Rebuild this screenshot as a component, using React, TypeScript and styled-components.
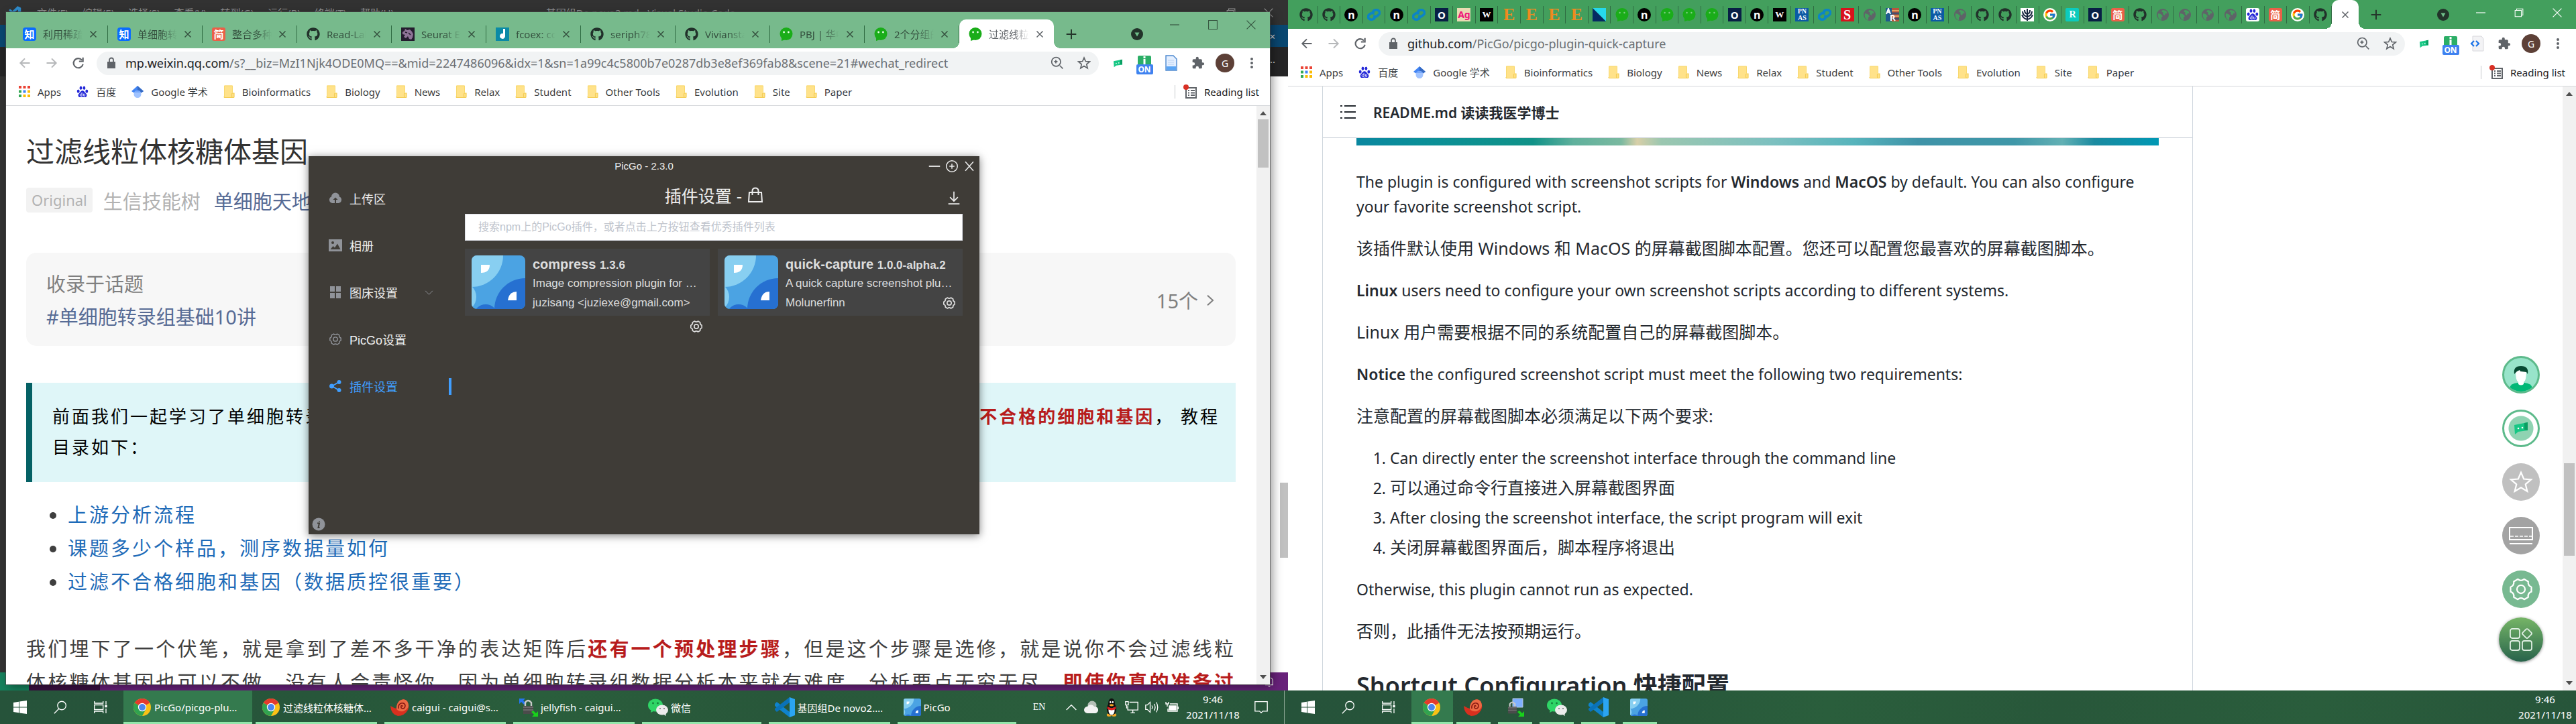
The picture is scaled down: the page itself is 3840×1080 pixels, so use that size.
import React from "react";
import styled, { createGlobalStyle, css } from "styled-components";
import { FaGithub } from "react-icons/fa";
import { FcGoogle } from "react-icons/fc";
import { VscVscode } from "react-icons/vsc";

const ui = `"Noto Sans", "Noto Sans CJK SC", sans-serif`;
const arial = `"Liberation Sans", "Noto Sans CJK SC", sans-serif`;

const Global = createGlobalStyle`
  * { box-sizing: border-box; }
  body { margin: 0; font-family: ${ui}; }
  button { border: 0; padding: 0; margin: 0; background: none; font: inherit; color: inherit; }
  input { border: 0; padding: 0; margin: 0; background: none; font: inherit; color: inherit; outline: 0; min-width: 0; }
  a { color: inherit; text-decoration: none; }
  h1, h2, p, ul, ol { margin: 0; padding: 0; font-weight: normal; }
  svg { display: block; flex: none; }
`;

/* ---------- desktop ---------- */
const Desktop = styled.div`
  display: grid;
  grid-template-columns: 1fr 1fr;
  height: 100vh;
  overflow: hidden;
`;
const Monitor = styled.div`
  display: flex;
  flex-direction: column;
  min-width: 0;
  min-height: 0;
`;
const WorkArea = styled.div`
  position: relative;
  flex: 1;
  min-height: 0;
  overflow: hidden;
  background: #fff;
`;

/* ---------- code editor behind ---------- */
const Editor = styled.div`
  display: flex;
  flex-direction: column;
  height: 100%;
`;
const EditorTitle = styled.div`
  display: grid;
  grid-template-columns: 1fr auto 1fr;
  align-items: center;
  height: 37px;
  padding: 0 22px 0 12px;
  background: #323232;
  color: #949494;
  font-size: 15px;
`;
const EditorMenu = styled.div`
  display: flex;
  align-items: center;
  gap: 21px;
  svg { color: #2f8fd0; }
`;
const EditorControls = styled.div`
  display: flex;
  justify-content: flex-end;
  gap: 42px;
`;
const EditorRow = styled.div<{ $bg: string; $h: number }>`
  display: flex;
  align-items: center;
  justify-content: flex-end;
  height: ${(p) => p.$h}px;
  padding-right: 19px;
  background: ${(p) => p.$bg};
  color: #ddd;
  font-size: 15px;
`;
const EditorBody = styled.div`
  display: flex;
  flex: 1;
  justify-content: space-between;
`;
const ActivityBar = styled.div`
  width: 60px;
  background: #333;
`;
const EditorScroll = styled.div`
  width: 12px;
  padding-top: 606px;
  &::before { content: ""; display: block; height: 112px; background: #c1c1c1; }
`;
const EditorStatus = styled.div`
  display: flex;
  align-items: center;
  height: 27px;
  background: #68217a;
  color: #eee;
  padding-right: 20px;
`;
const StatusPart = styled.div<{ $w: number; $bg: string }>`
  width: ${(p) => p.$w}px;
  height: 100%;
  background: ${(p) => p.$bg};
`;
const Push = styled.div`flex: 1;`;

/* ---------- browser ---------- */
const Browser = styled.section<{ $floating?: boolean }>`
  display: flex;
  flex-direction: column;
  background: #fff;
  overflow: hidden;
  ${(p) =>
    p.$floating
      ? css`
          position: absolute;
          inset: 18px 27px 9px 9px;
          box-shadow: 0 0 0 1px rgba(70, 70, 70, 0.7), 4px 4px 14px rgba(0, 0, 0, 0.4);
        `
      : css`height: 100%;`}
`;
const Strip = styled.div<{ $bg: string; $tall?: boolean }>`
  display: flex;
  align-items: flex-end;
  flex: none;
  height: ${(p) => (p.$tall ? 54 : 43)}px;
  padding-left: 11px;
  background: ${(p) => p.$bg};
`;
const StripButton = styled.button<{ $w: number }>`
  display: flex;
  align-items: center;
  justify-content: center;
  width: ${(p) => p.$w}px;
  height: 43px;
  color: #24362b;
`;
const WinControls = styled.div<{ $light?: boolean }>`
  display: flex;
  align-self: flex-start;
  color: ${(p) => (p.$light ? "#fff" : "#35543f")};
`;
const WinButton = styled.button`
  display: flex;
  align-items: center;
  justify-content: center;
  width: 57px;
  height: 38px;
`;
const TabBox = styled.div<{ $active?: boolean; $narrow?: boolean }>`
  position: relative;
  display: flex;
  align-items: center;
  height: 43px;
  color: ${(p) => (p.$active ? "#5f6368" : "#35513f")};
  font-size: 15px;
  ${(p) => (p.$narrow ? css`flex: 1; min-width: 0; justify-content: center;` : css`width: 141px; padding: 0 15px 0 14px; gap: 10px;`)}
  ${(p) =>
    p.$active
      ? css`
          background: #fff;
          border-radius: 10px 10px 0 0;
          &::before, &::after {
            content: "";
            position: absolute;
            bottom: 0;
            width: 10px;
            height: 10px;
          }
          &::before { right: 100%; background: radial-gradient(circle at 0 0, transparent 10px, #fff 10px); }
          &::after { left: 100%; background: radial-gradient(circle at 100% 0, transparent 10px, #fff 10px); }
        `
      : css`border-right: 1px solid transparent; border-image: linear-gradient(transparent 22%, #2f6b42 22%, #2f6b42 80%, transparent 80%) 1;`}
`;
const ActiveNarrow = styled(TabBox)`
  flex: none;
  width: 40px;
`;
const TabTitle = styled.span`
  flex: 1;
  min-width: 0;
  overflow: hidden;
  white-space: nowrap;
  mask-image: linear-gradient(90deg, #000 60%, transparent);
`;
const Tile = styled.span<{ $bg?: string; $fg?: string; $round?: string; $size?: number; $serif?: boolean }>`
  display: flex;
  align-items: center;
  justify-content: center;
  flex: none;
  width: 20px;
  height: 20px;
  overflow: hidden;
  border-radius: ${(p) => p.$round ?? "0"};
  background: ${(p) => p.$bg ?? "transparent"};
  color: ${(p) => p.$fg ?? "#fff"};
  font-family: ${(p) => (p.$serif ? `"Liberation Serif", serif` : ui)};
  font-size: ${(p) => p.$size ?? 14}px;
  font-weight: bold;
  line-height: 10px;
  text-align: center;
`;
const Toolbar = styled.div`
  display: flex;
  align-items: center;
  flex: none;
  height: 44px;
  padding: 0 7px 0 8px;
  color: #5f6368;
`;
const ToolButton = styled.button<{ $dim?: boolean }>`
  display: flex;
  align-items: center;
  justify-content: center;
  width: 40px;
  height: 40px;
  opacity: ${(p) => (p.$dim ? 0.45 : 1)};
`;
const Omnibox = styled.div`
  display: flex;
  align-items: center;
  flex: 1;
  min-width: 0;
  height: 35px;
  margin: 0 8px 0 7px;
  padding: 0 2px 0 14px;
  border-radius: 18px;
  background: #f1f3f4;
  font-size: 18px;
  label { color: #202124; padding-left: 13px; }
  input { flex: 1; color: #6b6f73; }
`;
const OnBadge = styled.span`
  display: flex;
  flex-direction: column;
  align-items: center;
  padding-top: 6px;
  b {
    display: block;
    width: 25px;
    height: 15px;
    border-radius: 2px;
    background: #3f82f0;
    color: #fff;
    font-size: 12px;
    line-height: 15px;
    text-align: center;
  }
`;
const Avatar = styled.span`
  display: flex;
  align-items: center;
  justify-content: center;
  width: 28px;
  height: 28px;
  border-radius: 50%;
  background: #5d4037;
  color: #fff;
  font-size: 14px;
`;
const Bookmarks = styled.nav`
  display: flex;
  align-items: center;
  flex: none;
  gap: 23px;
  height: 42px;
  padding: 0 16px 0 19px;
  border-bottom: 1px solid #d5d7da;
  color: #3c4043;
  font-size: 15px;
  line-height: 20px;
`;
const Bookmark = styled.a`
  display: flex;
  align-items: center;
  gap: 11px;
  white-space: nowrap;
`;
const Reading = styled.button`
  display: flex;
  align-items: center;
  gap: 10px;
  height: 20px;
  margin-left: auto;
  padding-left: 12px;
  border-left: 1px solid #c4c7ca;
  color: #202124;
`;
const Viewport = styled.div`
  position: relative;
  display: flex;
  flex: 1;
  min-height: 0;
  overflow: hidden;
`;
const ScrollTrack = styled.div`
  display: flex;
  flex-direction: column;
  align-items: center;
  flex: none;
  width: 20px;
  padding: 8px 0;
  background: #f1f1f1;
  color: #505050;
`;
const Thumb = styled.div<{ $before: number; $h: number }>`
  width: 16px;
  height: ${(p) => p.$h}px;
  margin: ${(p) => p.$before}px 0 auto;
  background: #c1c1c1;
`;

/* ---------- article page ---------- */
const Article = styled.main`
  flex: 1;
  min-width: 0;
  padding: 38px 31px 0 30px;
`;
const Title = styled.h1`
  font-size: 42px;
  line-height: 60px;
  color: #333;
`;
const Meta = styled.div`
  display: flex;
  align-items: center;
  gap: 20px;
  height: 37px;
  margin-top: 24px;
  font-size: 29px;
  color: #b2b2b2;
  white-space: nowrap;
  a { color: #576b95; }
`;
const Original = styled.span`
  margin-right: -4px;
  padding: 0 8px;
  border-radius: 4px;
  background: #f2f2f2;
  font-size: 22px;
  line-height: 37px;
`;
const Topic = styled.section`
  display: flex;
  align-items: center;
  justify-content: space-between;
  margin-top: 60px;
  padding: 22px 30px 19px;
  border-radius: 15px;
  background: #f7f7f7;
  color: #7f7f7f;
  font-size: 29px;
  line-height: 49px;
  a { display: block; color: #576b95; }
`;
const TopicCount = styled.button`
  display: flex;
  align-items: center;
  gap: 10px;
  font-size: 29px;
`;
const Quote = styled.blockquote`
  margin: 55px 0 0;
  padding: 27px 24px 29px 30px;
  border-left: 9px solid #056165;
  background: #dff6f8;
  color: #000;
  font-size: 26px;
  line-height: 46px;
  letter-spacing: 3px;
`;
const QuoteLine = styled.div`
  display: flex;
  justify-content: space-between;
  white-space: pre;
`;
const Red = styled.strong`
  color: #b71c1c;
  font-weight: bold;
`;
const Links = styled.ul`
  margin-top: 24px;
  padding-left: 62px;
  color: #3f3f3f;
  font-size: 29px;
  line-height: 50px;
  letter-spacing: 3px;
  a { color: #1e6bb8; }
`;
const Body = styled.p`
  margin-top: 50px;
  color: #3f3f3f;
  font-size: 29px;
  line-height: 50px;
  letter-spacing: 3px;
  text-align: justify;
  text-align-last: justify;
  white-space: nowrap;
`;

/* ---------- PicGo window ---------- */
const PicWindow = styled.section`
  position: absolute;
  left: 460px;
  top: 233px;
  display: flex;
  flex-direction: column;
  width: 1000px;
  height: 564px;
  background: #3f3c37;
  color: #eee;
  font-family: ${arial};
  box-shadow: 0 2px 12px rgba(0, 0, 0, 0.5);
`;
const PicTitle = styled.header`
  display: grid;
  grid-template-columns: 1fr auto 1fr;
  align-items: center;
  flex: none;
  height: 29px;
  padding: 0 6px;
  font-size: 15px;
`;
const PicControls = styled.div`
  display: flex;
  grid-column: 3;
  justify-content: flex-end;
  gap: 8px;
`;
const PicBody = styled.div`
  display: flex;
  flex: 1;
  min-height: 0;
`;
const Side = styled.nav`
  display: flex;
  flex-direction: column;
  width: 213px;
`;
const SideItem = styled.button<{ $active?: boolean }>`
  display: flex;
  align-items: center;
  gap: 11px;
  height: 70px;
  padding: 0 27px 2px 30px;
  color: ${(p) => (p.$active ? "#409eff" : "#eee")};
  font-size: 18px;
  svg { color: ${(p) => (p.$active ? "#409eff" : "#909399")}; }
  ${(p) =>
    p.$active &&
    css`
      padding-right: 0;
      &::after { content: ""; width: 4px; height: 25px; margin-left: auto; background: #409eff; }
    `}
  svg + span + svg { margin-left: auto; }
`;
const Info = styled.button`
  width: 20px;
  height: 20px;
  margin: auto 0 5px 5px;
  color: #909399;
`;
const PicMain = styled.div`
  flex: 1;
  min-width: 0;
  padding: 0 25px 0 20px;
`;
const PicHeading = styled.div`
  display: grid;
  grid-template-columns: 1fr auto 1fr;
  align-items: center;
  height: 57px;
  h1 { display: flex; grid-column: 2; align-items: center; gap: 9px; font-size: 25px; }
  > button { justify-self: end; padding: 8px 3px 0 0; }
`;
const Search = styled.input`
  display: block;
  width: 100%;
  height: 40px;
  padding: 0 19px;
  border: 1px solid #dcdfe6;
  background: #fff;
  font-size: 16px;
  color: #333;
  &::placeholder { color: #c0c4cc; opacity: 1; }
`;
const Cards = styled.div`
  display: grid;
  grid-template-columns: 1fr 1fr;
  gap: 12px;
  margin-top: 12px;
`;
const Card = styled.article`
  display: flex;
  gap: 11px;
  min-width: 0;
  height: 100px;
  padding: 10px;
  background: #444;
  color: #ddd;
  font-size: 17px;
`;
const CardText = styled.div`
  flex: 1;
  min-width: 0;
  white-space: nowrap;
`;
const CardName = styled.div`
  font-size: 20px;
  font-weight: bold;
  line-height: 27px;
  small { font-size: 17px; }
`;
const CardDesc = styled.div`
  overflow: hidden;
  line-height: 28px;
  text-overflow: ellipsis;
`;
const CardFoot = styled.div`
  display: flex;
  flex-wrap: wrap;
  gap: 5px 12px;
  line-height: 30px;
  button { display: flex; align-items: center; height: 30px; margin-left: auto; }
`;

/* ---------- repository page ---------- */
const Repo = styled.main`
  flex: 1;
  min-width: 0;
  padding-left: 51px;
`;
const ReadmeBox = styled.div`
  max-width: 1298px;
  height: 100%;
  border: solid #d0d7de;
  border-width: 0 1px;
  color: #24292f;
`;
const ReadmeHead = styled.header`
  display: flex;
  align-items: center;
  gap: 25px;
  height: 77px;
  padding-left: 26px;
  border-bottom: 1px solid #c9cfd8;
  font-size: 21px;
  font-weight: 600;
`;
const Prose = styled.div`
  padding: 0 50px;
  font-size: 23px;
  line-height: 37px;
  p { margin-bottom: 25px; }
  strong { font-weight: 600; }
  ol { padding-left: 50px; margin-bottom: 25px; }
  li + li { margin-top: 7px; }
  h2 { margin-top: 38px; font-size: 36px; font-weight: 600; line-height: 47px; white-space: nowrap; }
`;
const Zh = styled.span`
  font-size: 25px;
`;
const Banner = styled.div`
  height: 11px;
  margin-bottom: 36px;
  background: linear-gradient(90deg, #0a87a0 0%, #0a8f98 8%, #109288 22%, #5fb09c 27%, #7ab9a0 33%, #d8cfa8 35%, #9bc7b0 38%, #7cc0c0 52%, #57b4bc 62%, #3f93a8 70%, #3f97a8 82%, #62b0b4 88%, #1a8aa0 92%, #0098b4 100%);
`;
const Floaters = styled.div`
  position: absolute;
  top: 402px;
  right: 49px;
  display: flex;
  flex-direction: column;
  align-items: center;
  gap: 24px;
`;
const Round = styled.button<{ $bg: string; $ring?: boolean }>`
  display: flex;
  align-items: center;
  justify-content: center;
  width: 56px;
  height: 56px;
  border: ${(p) => (p.$ring ? "3px solid #5dba8b" : "0")};
  border-radius: 50%;
  background: ${(p) => p.$bg};
  color: #fff;
  overflow: hidden;
`;
const BigRound = styled(Round)`
  width: 66px;
  height: 66px;
  margin-top: -10px;
  box-shadow: 0 1px 4px rgba(0, 0, 0, 0.45);
`;

/* ---------- taskbar ---------- */
const Taskbar = styled.footer`
  display: flex;
  flex: none;
  height: 50px;
  background: linear-gradient(100deg, #26533a 0%, #27563a 25%, #2a5e3c 42%, #28573a 60%, #2a5d3c 80%, #27553a 100%);
  color: #fff;
  font-size: 15px;
`;
const TaskGroup = styled.div`
  display: flex;
  margin-right: 4px;
`;
const TaskIcon = styled.button`
  display: flex;
  align-items: center;
  justify-content: center;
  width: 60px;
`;
const TaskApp = styled.button<{ $active?: boolean; $compact?: boolean }>`
  position: relative;
  display: flex;
  align-items: center;
  gap: 4px;
  width: ${(p) => (p.$compact ? 62 : 192)}px;
  padding: 0 ${(p) => (p.$compact ? 17 : 14)}px 0 ${(p) => (p.$compact ? 16 : 14)}px;
  ${(p) => p.$active && css`background: #347a4e;`}
  &::after {
    content: "";
    position: absolute;
    left: ${(p) => (p.$active ? 0 : 5)}px;
    right: ${(p) => (p.$active ? 0 : 6)}px;
    bottom: 0;
    height: 3px;
    background: #93e6ab;
  }
  span { overflow: hidden; text-overflow: ellipsis; white-space: nowrap; }
`;
const Tray = styled.div`
  display: flex;
  align-items: center;
  margin-left: auto;
`;
const Lang = styled.button`
  width: 56px;
  margin-right: 5px;
  font-family: "Liberation Serif", serif;
  font-size: 14px;
`;
const TrayButton = styled.button`
  display: flex;
  justify-content: center;
  width: 30px;
`;
const Clock = styled.time`
  display: flex;
  flex-direction: column;
  align-items: center;
  width: 92px;
  font-size: 15px;
  line-height: 23px;
`;
const Notify = styled.button`
  display: flex;
  justify-content: center;
  width: 52px;
  margin-right: 8px;
`;
const ShowDesktop = styled.button`
  width: 6px;
  height: 50px;
  border-left: 1px solid #8fa897;
`;

/* ---------- drawings ---------- */
const Line = ({ d, s = 20, w = 2, box = 24 }: { d: string; s?: number; w?: number; box?: number }) => (
  <svg width={s} height={s} viewBox={`0 0 ${box} ${box}`} fill="none" stroke="currentColor" strokeWidth={w}>
    <path d={d} />
  </svg>
);
const Cross = ({ s = 14, w = 2.4 }) => <Line s={s} w={w} d="M3 3L21 21M21 3L3 21" />;
const Wx = () => (
  <svg width="20" height="20" viewBox="0 0 20 20">
    <circle cx="10" cy="9.5" r="9.5" fill="#1aad19" />
    <path d="M3 15l0 5 6-2z" fill="#1aad19" />
    <circle cx="6.6" cy="7" r="1.4" fill="#e8ffe8" />
    <circle cx="13.4" cy="7" r="1.4" fill="#e8ffe8" />
  </svg>
);
const WxDim = () => (
  <svg width="20" height="20" viewBox="0 0 20 20">
    <circle cx="10" cy="9.5" r="9.5" fill="#1aad19" />
    <path d="M3 15l0 5 6-2z" fill="#1aad19" />
    <circle cx="6.6" cy="7" r="1.2" fill="#7fce83" />
    <circle cx="13.4" cy="7" r="1.2" fill="#7fce83" />
  </svg>
);
const Curl = () => (
  <svg width="20" height="20" viewBox="0 0 20 20" fill="none" stroke="#0b84c6" strokeWidth="3.6" strokeLinecap="round">
    <path d="M9 8q-1-4 3-5t6 2-2 6-5 2" />
    <path d="M11 12q1 4-3 5t-6-2 2-6 5-2" />
  </svg>
);
const Globe = () => (
  <svg width="20" height="20" viewBox="0 0 20 20">
    <circle cx="10" cy="10" r="9" fill="#5f6368" />
    <path d="M3 8l4 1 3 3-2 2v4c-4-1-6-5-5-10zM10 3l5 1 2 4-3 0-1 3-3-2 1-2-3-2z" fill="#439f5d" />
  </svg>
);
const Baidu = ({ s = 20 }) => (
  <svg width={s} height={s} viewBox="0 0 20 20" fill="#2529d8">
    <ellipse cx="3" cy="9" rx="2.2" ry="2.9" />
    <ellipse cx="7.2" cy="3.6" rx="2.1" ry="3" />
    <ellipse cx="12.7" cy="3.6" rx="2.1" ry="3" />
    <ellipse cx="17" cy="9" rx="2.2" ry="2.9" />
    <path d="M10 8c3 0 3.600 3 6 5 2 2 1.400 6-2 6-1.500 0-2.400-.5-4-.5s-2.500.5-4 .5c-3.400 0-4-4-2-6 2.400-2 3-5 6-5z" />
    <path d="M9 11v6H7.500a1.500 1.500 0 010-3.500H9M11.500 13v3q0 1 1 1h1.500v-4" fill="none" stroke="#fff" strokeWidth="1" />
  </svg>
);
const Triangle = () => (
  <svg width="20" height="20" viewBox="0 0 20 20">
    <path d="M0 0H20V20z" fill="#26d9ec" />
    <path d="M0 0V20H20z" fill="#052a63" />
  </svg>
);
const Dino = () => (
  <svg width="20" height="20" viewBox="0 0 20 20">
    <path fill="#241c2e" d="M0 0h20v20H0z" />
    <path d="M2 7l3-2 1-3 3 2 4-1 3 3 2 4-1 5-2 3-3-1-2-4-3 3-3-2 2-3-4-1z" fill="#8d7396" />
    <path d="M6 7l3 1M11 8l3 3" stroke="#241c2e" strokeWidth="1.500" />
  </svg>
);
const Note = () => (
  <svg width="20" height="20" viewBox="0 0 20 20">
    <path fill="#0a8aa6" d="M0 0h20v20H0z" />
    <path d="M11 2h3v11a4 4 0 11-3-4z" fill="#fff" />
  </svg>
);
const Tree = () => (
  <svg width="20" height="20" viewBox="0 0 20 20">
    <path fill="#fff" d="M0 0h20v20H0z" />
    <path d="M10 1v18M3 5q0 6 7 8M17 5q0 6-7 8M6 3q0 5 4 6M14 3q0 5-4 6M2 10q2 6 8 7M18 10q-2 6-8 7" fill="none" stroke="#14243d" strokeWidth="2" />
  </svg>
);
const Stripes = () => (
  <svg width="20" height="20" viewBox="0 0 20 20">
    <path fill="#b9553c" d="M0 0h20v20H0z" />
    <path fill="#1f5b8e" d="M0 0h9v20H0z" />
    <path d="M9 4h11M9 12h11" stroke="#e0a060" strokeWidth="2" />
    <path d="M9 8h11M9 16h11" stroke="#49506a" strokeWidth="3" />
    <path d="M1 9L4 1l3 8M2 6h4M8 19v-8h3q3 2 0 4l3 4" fill="none" stroke="#fff" strokeWidth="2" />
  </svg>
);
const Circle = ({ r = 9 }) => (
  <svg width="20" height="20" viewBox="0 0 20 20">
    <circle cx="10" cy="10" r={r} fill="#22332a" />
    <path d="M6.500 7.500h7L10 13.500z" fill="#6fbf8a" />
  </svg>
);
const Apps = () => (
  <svg width="17" height="17" viewBox="0 0 17 17">
    {["#ea4335", "#ea4335", "#ea4335", "#34a853", "#4285f4", "#fbbc04", "#34a853", "#fbbc04", "#fbbc04"].map((c, i) => (
      <rect key={i} x={(i % 3) * 6.500} y={Math.floor(i / 3) * 6.500} width="4" height="4" fill={c} />
    ))}
  </svg>
);
const Scholar = () => (
  <svg width="18" height="18" viewBox="0 0 18 18">
    <path d="M9 0l9 8-9 6-9-6z" fill="#4285f4" />
    <path d="M9 0l9 8-9 6z" fill="#356ac3" />
    <circle cx="9" cy="12.500" r="5.500" fill="#a0c3ff" />
    <path d="M4 10a5.500 5.500 0 0110 0z" fill="#76a7fa" />
  </svg>
);
const Folder = () => (
  <svg width="17" height="19" viewBox="0 0 17 19">
    <path d="M1 1.500q0-1 1-1h11q1 0 1 1V12h2v5.500q0 1-1 1H2q-1 0-1-1z" fill="#ffe28a" />
    <path d="M1 17q0 1.500 1 1.500h12q-1.500 0-1.500-2V13q0-1 1.500-1h2v5.500q0 1-1.500 1H2" fill="none" stroke="#f4cd55" strokeWidth="1.200" />
    <path d="M1.500 17V1h12v10" fill="none" stroke="#f8d970" />
  </svg>
);
const PicLogo = ({ s = 80 }) => (
  <svg width={s} height={s} viewBox="0 0 80 80" style={{ borderRadius: Math.round(s / 10) }}>
    <path fill="#4ba3e3" d="M0 0h80v80H0z" />
    <circle cx="0" cy="0" r="47" fill="#88cff1" />
    <circle cx="-15" cy="62" r="22" fill="#88cff1" />
    <circle cx="80" cy="80" r="46" fill="#2670d1" />
    <circle cx="21" cy="91" r="18" fill="#2670d1" />
    <path d="M14 14h13q0 12-13 12zM67 54v13H54q2-13 13-13z" fill="#fff" />
  </svg>
);
const Gear = ({ s = 20, w = 1.600 }) => (
  <svg width={s} height={s} viewBox="0 0 24 24" fill="none" stroke="currentColor" strokeWidth={w} strokeLinejoin="round">
    <path d="M9 2.500q3 2.500 6 0l3.800 2.200q-.6 3.800 3 5.200v4.400q-3.600 1.300-3 5.100L15 21.600q-3-2.600-6 0l-3.800-2.200q.6-3.800-3-5.100V9.900q3.600-1.400 3-5.200z" />
    <circle cx="12" cy="12" r="3.800" />
  </svg>
);
const Chrome = () => (
  <svg width="28" height="28" viewBox="0 0 28 28">
    <circle cx="14" cy="14" r="13" fill="#fbc116" />
    <path d="M14 14L2.700 7.500A13 13 0 0125.300 7.500z" fill="#e33b2e" />
    <path d="M14 14L2.700 7.500A13 13 0 0014 27l5.500-10z" fill="#31a350" />
    <path d="M14 7.500h11.300L14 8z" fill="#e33b2e" />
    <circle cx="14" cy="14" r="6.200" fill="#fff" />
    <circle cx="14" cy="14" r="4.900" fill="#4a86ee" />
  </svg>
);
const Spiral = () => (
  <svg width="28" height="28" viewBox="0 0 28 28">
    <path d="M0 12q5 3 9 4 0-8 5-12 7-4 11 1 4 7 1 13-5 9-15 9Q1 25 0 12z" fill="#d8301f" />
    <path d="M9 16q0-8 5-12 7-4 11 1 4 7 0 11-4 5-10 4-5-1-6-4z" fill="#ec6a44" />
    <path d="M12 16q-1-6 4-8 5-1 6 3 0 5-4 5-3-1-2-4 2-1 2 1" fill="none" stroke="#8a1a12" strokeWidth="1.600" />
  </svg>
);
const Lock = ({ screen }: { screen?: boolean }) => (
  <svg width="28" height="28" viewBox="0 0 28 28">
    {screen ? (
      <path d="M11 1h15v13H11z" fill="#7fb0ff" stroke="#b8c8dd" />
    ) : (
      <path d="M0 1h9l-3 3 4 4-3 2-4-4-3 3z" fill="#2575f0" />
    )}
    <g transform={screen ? "translate(-1 3) scale(.85)" : undefined}>
      <path d="M9 13V7q4-6 9 0v6" fill="none" stroke="#c9c9c9" strokeWidth="2.400" />
      <path d="M6 12h15v12H6z" fill="#4b4b4b" />
      <path d="M6 14h15M6 18h15" stroke="#8a8a8a" />
    </g>
    <path d="M28 28h-9l3-3-4-4 3-2 4 4 3-3z" fill="#19d11b" />
  </svg>
);
const WeChat = () => (
  <svg width="30" height="28" viewBox="0 0 30 28">
    <ellipse cx="11" cy="11" rx="11" ry="9.500" fill="#2fd566" />
    <path d="M5 17l-1 5 6-3z" fill="#2fd566" />
    <circle cx="7.500" cy="8" r="1.400" fill="#14803a" />
    <circle cx="14.500" cy="8" r="1.400" fill="#14803a" />
    <ellipse cx="21" cy="18" rx="9" ry="7.500" fill="#ececec" />
    <path d="M22 24l5 3-1-5z" fill="#ececec" />
    <circle cx="18" cy="16" r="1.100" fill="#777" />
    <circle cx="24" cy="16" r="1.100" fill="#777" />
  </svg>
);
const CodeLogo = () => (
  <svg width="30" height="30" viewBox="0 0 30 30">
    <path d="M0 10l3-3 19 15v8L0 13z" fill="#0f83cc" />
    <path d="M0 19l3 3L22 8V0L0 17z" fill="#0a72b8" />
    <path d="M22 0l8 3v24l-8 3z" fill="#2ba5f2" />
  </svg>
);
const WinLogo = () => (
  <svg width="20" height="20" viewBox="0 0 20 20" fill="#fff">
    <path d="M0 3l8-1.200V9.500H0zM9 1.600L20 0v9.500H9zM0 10.500h8v7.700L0 17zM9 10.500h11V20L9 18.400z" />
  </svg>
);
const TaskView = () => (
  <svg width="20" height="20" viewBox="0 0 20 20" fill="none" stroke="#fff" strokeWidth="1.300">
    <path d="M.7 1v3h13V1M.7 19v-3h13v3M.7 6.500h13v7H.7zM18 1v5M18 12v7" />
    <path d="M17 7.500h2v2h-2z" fill="#fff" />
  </svg>
);
const Cloud = () => (
  <svg width="22" height="20" viewBox="0 0 22 20">
    <circle cx="12" cy="7" r="6.500" fill="#b3bfb6" />
    <path d="M5 19a5 5 0 010-10 6 6 0 0110 0 5 5 0 012 10z" fill="#f2f2f2" />
  </svg>
);
const Penguin = () => (
  <svg width="18" height="28" viewBox="0 0 20 22" preserveAspectRatio="none">
    <ellipse cx="6" cy="20" rx="4" ry="1.800" fill="#f5a623" />
    <ellipse cx="14" cy="20" rx="4" ry="1.800" fill="#f5a623" />
    <ellipse cx="10" cy="13" rx="8" ry="7.500" fill="#111" />
    <ellipse cx="10" cy="15" rx="5" ry="5" fill="#fff" />
    <ellipse cx="10" cy="6.500" rx="5.500" ry="6" fill="#111" />
    <circle cx="8" cy="5" r="1.300" fill="#fff" />
    <circle cx="12" cy="5" r="1.300" fill="#fff" />
    <ellipse cx="10" cy="8.500" rx="3.500" ry="1.300" fill="#f5a623" />
    <path d="M3 10q7 4 14 0v3q-7 3-14 0z" fill="#e02020" />
  </svg>
);
const Doc = ({ code }: { code?: boolean }) => (
  <svg width="22" height="24" viewBox="0 0 22 24" fill="none">
    {code ? (
      <>
        <path d="M4 1h13l3 4v18H4z" fill="#f3f3f5" stroke="#d8d8dc" />
        <path d="M6 8l-4 4 4 4M9 8l4 4-4 4" stroke="#1a73e8" strokeWidth="2.200" />
      </>
    ) : (
      <>
        <path d="M3 1h11l5 5v17H3z" fill="#e4efff" stroke="#4c88cf" strokeWidth="1.400" />
        <path d="M6 8h9M6 11h9M6 14h9" stroke="#b9d2f2" />
        <path d="M4 17h14v5H4z" fill="#5aa5f5" />
      </>
    )}
  </svg>
);
const Puzzle = () => (
  <svg width="20" height="20" viewBox="0 0 24 24" fill="currentColor">
    <path d="M20.500 11H19V7a2 2 0 00-2-2h-4V3.500a2.500 2.500 0 00-5 0V5H4a2 2 0 00-2 2v3.800h1.500a2.700 2.700 0 010 5.400H2V20a2 2 0 002 2h3.800v-1.500a2.700 2.700 0 015.400 0V22H17a2 2 0 002-2v-4h1.500a2.500 2.500 0 000-5z" />
  </svg>
);
const Chat = ({ s = 14 }) => (
  <svg width={s} height={s} viewBox="0 0 20 20">
    <path d="M0 5l20-4v12L6 15l-5 4z" fill="#16c784" />
    <path d="M15 2l5-1v12l-5-1z" fill="#0a9e62" />
    <circle cx="6" cy="10" r="1.300" fill="#fff" />
    <circle cx="12" cy="9" r="1.300" fill="#fff" />
  </svg>
);

/* ---------- composite parts ---------- */
const N = () => <Tile $bg="#000" $round="50%" $size={16}>n</Tile>;
const O = () => <Tile $bg="#081f45" $size={15}>O</Tile>;
const W = () => <Tile $bg="#000" $size={13} $serif>W</Tile>;
const E = () => <Tile $fg="#ef8a1d" $size={26} $serif>E</Tile>;
const Pnas = () => <Tile $bg="#0b5aa5" $size={10} $serif>PN AS</Tile>;
const Jian = () => <Tile $bg="#ea6049" $round="3px" $size={15}>简</Tile>;
const Zhi = () => <Tile $bg="#0a6cff" $round="4px" $size={15}>知</Tile>;
const Gh = () => <FaGithub size={20} color="#21302a" />;

const pinned: React.ComponentType[] = [
  Gh, Gh, N, Curl, N, Curl, O, () => <Tile $bg="#e8dcb4" $fg="#f0147a">Ag</Tile>, W, E, E, E, E, Triangle, WxDim, N, WxDim, WxDim, WxDim, O, N, W, Pnas,
  Curl, () => <Tile $bg="#d8121c" $size={20} $serif>S</Tile>, Globe, Stripes, N, Pnas, Globe, Gh, Gh, Tree,
  () => <Tile $bg="#fff" $round="50%"><FcGoogle size={18} /></Tile>, () => <Tile $bg="#0ccbbd" $round="2px" $serif>R</Tile>, O, Jian, Gh,
  Globe, Globe, Globe, Globe, () => <Tile $bg="#fff" $round="3px"><Baidu s={18} /></Tile>, Jian,
  () => <Tile $bg="#fff" $round="50%"><FcGoogle size={18} /></Tile>, Gh,
];

const tabs: [React.ComponentType, string][] = [
  [Zhi, "利用稀疏"], [Zhi, "单细胞转"], [Jian, "整合多种"], [Gh, "Read-Lab"], [Dino, "Seurat Ex"], [Note, "fcoex: co"],
  [Gh, "seriph78"], [Gh, "Viviansta"], [Wx, "PBJ | 华中"], [Wx, "2个分组的"], [Wx, "过滤线粒"],
];

const Windows = ({ light, restore }: { light?: boolean; restore?: boolean }) => (
  <WinControls $light={light}>
    <WinButton aria-label="Minimize"><Line s={14} w={2} d="M0 12H24" /></WinButton>
    <WinButton aria-label="Maximize"><Line s={14} w={1.800} d={restore ? "M2 6H18V22H2zM6 6V2H22V18H18" : "M1 1H23V23H1z"} /></WinButton>
    <WinButton aria-label="Close"><Line s={14} w={2} d="M1 1L23 23M23 1L1 23" /></WinButton>
  </WinControls>
);

const Bar = ({ id, host, path, code, canBack }: { id: string; host: string; path: string; code?: boolean; canBack?: boolean }) => (
  <Toolbar>
    <ToolButton aria-label="Back" $dim={!canBack}><Line w={2.400} d="M21 12H4M12 4L4 12L12 20" /></ToolButton>
    <ToolButton aria-label="Forward" $dim><Line w={2.400} d="M3 12H20M12 4L20 12L12 20" /></ToolButton>
    <ToolButton aria-label="Reload"><Line w={2.600} d="M20 14A8.500 8.500 0 1118 6.500M20 2V9H13" /></ToolButton>
    <Omnibox>
      <svg width="16" height="18" viewBox="0 0 16 18" fill="currentColor">
        <path d="M2 7h12v10H2z" />
        <path d="M5 8V4.500a3 3 0 016 0V8" fill="none" stroke="currentColor" strokeWidth="1.800" />
      </svg>
      <label htmlFor={id}>{host}</label>
      <input id={id} defaultValue={path} />
      <ToolButton aria-label="Zoom"><Line d="M16.500 16.500L22 22M9.500 6.500V12.500M6.500 9.500H12.500M18 9.800A8 8 0 112 9.800A8 8 0 0118 9.800" /></ToolButton>
      <ToolButton aria-label="Bookmark"><Line d="M12 2.500L14.800 9L22 9.600L16.500 14.300L18.200 21.300L12 17.500L5.800 21.300L7.500 14.300L2 9.600L9.200 9z" /></ToolButton>
    </Omnibox>
    <ToolButton aria-label="Chat extension"><Chat s={13} /></ToolButton>
    <ToolButton aria-label="Extension on">
      <OnBadge>
        <svg width="20" height="13" viewBox="0 0 20 13">
          <path d="M0 2q0-2 2-2h16q2 0 2 2v11H0z" fill="#2bae66" />
          <path d="M8.500 5h3v8h-3zM8.500 1h3v3h-3z" fill="#fff" />
        </svg>
        <b>ON</b>
      </OnBadge>
    </ToolButton>
    <ToolButton aria-label="Document extension"><Doc code={code} /></ToolButton>
    <ToolButton aria-label="Extensions"><Puzzle /></ToolButton>
    <ToolButton aria-label="Profile"><Avatar>G</Avatar></ToolButton>
    <ToolButton aria-label="Menu">
      <svg width="6" height="18" fill="currentColor"><circle cx="3" cy="3" r="2" /><circle cx="3" cy="9" r="2" /><circle cx="3" cy="15" r="2" /></svg>
    </ToolButton>
  </Toolbar>
);

const Marks = () => (
  <Bookmarks>
    <Bookmark href="#"><Apps />Apps</Bookmark>
    <Bookmark href="#"><Baidu s={18} />百度</Bookmark>
    <Bookmark href="#"><Scholar />Google 学术</Bookmark>
    {["Bioinformatics", "Biology", "News", "Relax", "Student", "Other Tools", "Evolution", "Site", "Paper"].map((t) => (
      <Bookmark href="#" key={t}><Folder />{t}</Bookmark>
    ))}
    <Reading>
      <svg width="21" height="22" viewBox="0 0 21 22" fill="none" stroke="#5f6368" strokeWidth="2">
        <path d="M4 5h15v15H4zM7 9h2M11 9h6M7 12.500h2M11 12.500h6M7 16h2M11 16h6" />
        <circle cx="4" cy="4" r="4" fill="#d93025" stroke="none" />
      </svg>
      Reading list
    </Reading>
  </Bookmarks>
);

const Scroll = ({ before, h }: { before: number; h: number }) => (
  <ScrollTrack>
    <svg width="10" height="6" fill="currentColor"><path d="M5 0l5 6H0z" /></svg>
    <Thumb $before={before} $h={h} />
    <svg width="10" height="6" fill="currentColor"><path d="M0 0h10L5 6z" /></svg>
  </ScrollTrack>
);

const StartGroup = () => (
  <TaskGroup>
    <TaskIcon aria-label="Start"><WinLogo /></TaskIcon>
    <TaskIcon aria-label="Search"><Line w={1.600} d="M9 15L1 23M22 9A7.500 7.500 0 117 9A7.500 7.500 0 0122 9" /></TaskIcon>
    <TaskIcon aria-label="Task view"><TaskView /></TaskIcon>
  </TaskGroup>
);

const Time = () => (
  <Clock>
    <span>9:46</span>
    <span>2021/11/18</span>
  </Clock>
);

const PluginCard = ({ name, version, desc, author }: { name: string; version: string; desc: string; author: string }) => (
  <Card>
    <PicLogo />
    <CardText>
      <CardName>{name} <small>{version}</small></CardName>
      <CardDesc>{desc}</CardDesc>
      <CardFoot>
        <span>{author}</span>
        <button aria-label={`${name} settings`}><Gear s={20} w={2} /></button>
      </CardFoot>
    </CardText>
  </Card>
);

const PicGo = () => (
  <PicWindow>
    <PicTitle>
      <span />
      <span>PicGo - 2.3.0</span>
      <PicControls>
        <button aria-label="Minimize"><Line s={18} w={2.400} d="M1 12H23" /></button>
        <button aria-label="Mini window"><Line s={18} w={2} d="M12 7V17M7 12H17M23 12A11 11 0 111 12A11 11 0 0123 12" /></button>
        <button aria-label="Close"><Line s={18} w={2} d="M4 3L20 21M20 3L4 21" /></button>
      </PicControls>
    </PicTitle>
    <PicBody>
      <Side>
        <SideItem>
          <svg width="20" height="18" viewBox="0 0 20 18" fill="currentColor">
            <path d="M5 16a5 5 0 01-1-9.500 6 6 0 0112 0A5 5 0 0115 16h-4v-5h2.500L10 7.500 6.500 11H9v5z" />
          </svg>
          <span>上传区</span>
        </SideItem>
        <SideItem>
          <svg width="20" height="18" viewBox="0 0 20 18">
            <path d="M0 0h20v18H0z" fill="currentColor" />
            <path d="M2.500 15l4-5 2.500 2.500 4-6 4.500 8.500z" fill="#3f3c37" />
            <circle cx="6" cy="5" r="2" fill="#3f3c37" />
          </svg>
          <span>相册</span>
        </SideItem>
        <SideItem>
          <svg width="20" height="18" viewBox="0 0 20 18" fill="currentColor"><path d="M2 0h7v8H2zM11 0h7v8h-7zM2 10h7v8H2zM11 10h7v8h-7z" /></svg>
          <span>图床设置</span>
          <Line s={13} w={1.800} d="M2 7L12 17L22 7" />
        </SideItem>
        <SideItem><Gear s={20} w={1.700} /><span>PicGo设置</span></SideItem>
        <SideItem $active>
          <svg width="20" height="20" viewBox="0 0 20 20" fill="currentColor">
            <path d="M5 10L15 4M5 10l10 6" stroke="currentColor" strokeWidth="2" />
            <circle cx="4.500" cy="10" r="3.500" /><circle cx="15.500" cy="4" r="3" /><circle cx="15.500" cy="16" r="3" />
          </svg>
          <span>插件设置</span>
        </SideItem>
        <Info aria-label="About">
          <svg width="20" height="20" viewBox="0 0 20 20">
            <circle cx="10" cy="10" r="9.500" fill="currentColor" />
            <path d="M8 8.500h3L9.500 15H11.500M11 5v1" fill="none" stroke="#3f3c37" strokeWidth="2" />
          </svg>
        </Info>
      </Side>
      <PicMain>
        <PicHeading>
          <h1>插件设置 -
            <svg width="22" height="24" viewBox="0 0 22 24" fill="none" stroke="currentColor" strokeWidth="2">
              <path d="M2 8h18l1 14H1zM6.500 12V6q0-4.500 4.500-4.500T15.500 6v6" />
            </svg>
          </h1>
          <button aria-label="Import"><Line s={20} w={2} d="M12 1V17M5 11L12 18L19 11M2 23H22" /></button>
        </PicHeading>
        <Search aria-label="搜索插件" placeholder="搜索npm上的PicGo插件，或者点击上方按钮查看优秀插件列表" />
        <Cards>
          <PluginCard name="compress" version="1.3.6" desc="Image compression plugin for PicGo" author="juzisang <juziexe@gmail.com>" />
          <PluginCard name="quick-capture" version="1.0.0-alpha.2" desc="A quick capture screenshot plugin" author="Molunerfinn" />
        </Cards>
      </PicMain>
    </PicBody>
  </PicWindow>
);

const LeftMonitor = () => (
  <Monitor>
    <WorkArea>
      <Editor>
        <EditorTitle>
          <EditorMenu>
            <VscVscode size={22} />
            {["文件(F)", "编辑(E)", "选择(S)", "查看(V)", "转到(G)", "运行(R)", "终端(T)", "帮助(U)"].map((m) => <span key={m}>{m}</span>)}
          </EditorMenu>
          <span>基因组De novo2.md - Visual Studio Code</span>
          <EditorControls><Line s={14} d="M2 6H18V22H2zM6 6V2H22V18H18" /><Line s={14} d="M1 1L23 23M23 1L1 23" /></EditorControls>
        </EditorTitle>
        <EditorRow $bg="#094771" $h={33}>×</EditorRow>
        <EditorRow $bg="#252526" $h={44}>···</EditorRow>
        <EditorBody><ActivityBar /><EditorScroll /></EditorBody>
        <EditorStatus>
          <StatusPart $w={43} $bg="#16825d" />
          <StatusPart $w={106} $bg="#3a1042" />
          <Push />
          <Line s={16} w={1.800} d="M4 19V10Q4 3 12 3T20 10V19zM10 22H14" />
        </EditorStatus>
      </Editor>
      <Browser $floating>
        <Strip $bg="#77ba8c" $tall>
          {tabs.map(([Icon, title], i) => (
            <TabBox key={i} $active={i === tabs.length - 1}>
              <Icon />
              <TabTitle>{title}</TabTitle>
              <button aria-label="Close tab"><Cross s={12} w={3} /></button>
            </TabBox>
          ))}
          <StripButton $w={52} aria-label="New tab"><Line s={16} w={3} d="M12 1V23M1 12H23" /></StripButton>
          <Push />
          <StripButton $w={54} aria-label="Search tabs"><Circle /></StripButton>
          <Windows />
        </Strip>
        <Bar id="url-left" host="mp.weixin.qq.com" path="/s?__biz=MzI1Njk4ODE0MQ==&mid=2247486096&idx=1&sn=1a99c4c5800b7e0287db3e8ef369fab8&scene=21#wechat_redirect" />
        <Marks />
        <Viewport>
          <Article>
            <Title>过滤线粒体核糖体基因</Title>
            <Meta><Original>Original</Original><span>生信技能树</span><a href="#">单细胞天地</a></Meta>
            <Topic>
              <div>收录于话题<a href="#">#单细胞转录组基础10讲</a></div>
              <TopicCount>15个<Line s={16} w={3} d="M6 1L18 12L6 23" /></TopicCount>
            </Topic>
            <Quote>
              <QuoteLine><span>前面我们一起学习了单细胞转录</span><span><Red>不合格的细胞和基因</Red>， 教程</span></QuoteLine>
              <QuoteLine>目录如下：</QuoteLine>
            </Quote>
            <Links>
              <li><a href="#">上游分析流程</a></li>
              <li><a href="#">课题多少个样品，测序数据量如何</a></li>
              <li><a href="#">过滤不合格细胞和基因（数据质控很重要）</a></li>
            </Links>
            <Body>
              我们埋下了一个伏笔，就是拿到了差不多干净的表达矩阵后<Red>还有一个预处理步骤</Red>，但是这个步骤是选修，就是说你不会过滤线粒<br />
              体核糖体基因也可以不做，没有人会责怪你，因为单细胞转录组数据分析本来就有难度，分析要点无穷无尽，<Red>即使你真的准备过</Red>
            </Body>
          </Article>
          <Scroll before={6} h={72} />
        </Viewport>
      </Browser>
      <PicGo />
    </WorkArea>
    <Taskbar>
      <StartGroup />
      <TaskApp $active><Chrome /><span>PicGo/picgo-plugin-quick</span></TaskApp>
      <TaskApp><Chrome /><span>过滤线粒体核糖体基因</span></TaskApp>
      <TaskApp><Spiral /><span>caigui - caigui@server</span></TaskApp>
      <TaskApp><Lock /><span>jellyfish - caigui@server</span></TaskApp>
      <TaskApp><WeChat /><span>微信</span></TaskApp>
      <TaskApp><CodeLogo /><span>基因组De novo2.md - Visual</span></TaskApp>
      <TaskApp><PicLogo s={26} /><span>PicGo</span></TaskApp>
      <Tray>
        <Lang>EN</Lang>
        <TrayButton aria-label="Show hidden icons"><Line s={16} w={2} d="M1 18L12 7L23 18" /></TrayButton>
        <TrayButton aria-label="Cloud"><Cloud /></TrayButton>
        <TrayButton aria-label="QQ"><Penguin /></TrayButton>
        <TrayButton aria-label="Network"><Line s={20} w={1.600} d="M8 3H23V17H5V10M10 22H18M14 17V22M1 2H6V8H1zM3 8V14" /></TrayButton>
        <TrayButton aria-label="Volume"><Line s={20} w={1.600} d="M1 8H4L9 3V21L4 16H1zM12 9Q14 12 12 15M16 6Q20 12 16 18M20 3Q25 12 20 21" /></TrayButton>
        <TrayButton aria-label="Battery">
          <svg width="20" height="18" viewBox="0 0 20 18" fill="none" stroke="#fff" strokeWidth="1.400"><path d="M7 4h11v11H4v-4M1 1v3h4V1M3 4v4M19.500 8v4" /><path d="M6 7h10v6H6z" fill="#fff" /></svg>
        </TrayButton>
        <Time />
        <Notify aria-label="Notifications"><Line s={20} w={1.600} d="M1 2H23V19H15L12 22L9 19H1z" /></Notify>
        <ShowDesktop aria-label="Show desktop" />
      </Tray>
    </Taskbar>
  </Monitor>
);

const RightMonitor = () => (
  <Monitor>
    <WorkArea>
      <Browser>
        <Strip $bg="#439f5d">
          {pinned.map((Icon, i) => <TabBox key={i} $narrow><Icon /></TabBox>)}
          <ActiveNarrow $narrow $active><button aria-label="Close tab"><Cross s={12} w={3} /></button></ActiveNarrow>
          <StripButton $w={52} aria-label="New tab"><Line s={16} w={3} d="M12 1V23M1 12H23" /></StripButton>
          <StripButton $w={47} aria-hidden />
          <StripButton $w={54} aria-label="Search tabs"><Circle /></StripButton>
          <Windows light restore />
        </Strip>
        <Bar id="url-right" host="github.com" path="/PicGo/picgo-plugin-quick-capture" code canBack />
        <Marks />
        <Viewport>
          <Repo>
            <ReadmeBox>
              <ReadmeHead>
                <Line s={24} w={2} d="M6 3H23M6 12H23M6 21H23M0 3H3M0 12H3M0 21H3" />
                <span>README.md 读读我医学博士</span>
              </ReadmeHead>
              <Prose>
                <Banner />
                <p>The plugin is configured with screenshot scripts for <strong>Windows</strong> and <strong>MacOS</strong> by default. You can also configure your favorite screenshot script.</p>
                <p><Zh>该插件默认使用 Windows 和 MacOS 的屏幕截图脚本配置。您还可以配置您最喜欢的屏幕截图脚本。</Zh></p>
                <p><strong>Linux</strong> users need to configure your own screenshot scripts according to different systems.</p>
                <p><Zh>Linux 用户需要根据不同的系统配置自己的屏幕截图脚本。</Zh></p>
                <p><strong>Notice</strong> the configured screenshot script must meet the following two requirements:</p>
                <p><Zh>注意配置的屏幕截图脚本必须满足以下两个要求:</Zh></p>
                <ol>
                  <li>Can directly enter the screenshot interface through the command line</li>
                  <li><Zh>可以通过命令行直接进入屏幕截图界面</Zh></li>
                  <li>After closing the screenshot interface, the script program will exit</li>
                  <li><Zh>关闭屏幕截图界面后，脚本程序将退出</Zh></li>
                </ol>
                <p>Otherwise, this plugin cannot run as expected.</p>
                <p><Zh>否则，此插件无法按预期运行。</Zh></p>
                <h2>Shortcut Configuration 快捷配置</h2>
              </Prose>
            </ReadmeBox>
          </Repo>
          <Scroll before={548} h={138} />
          <Floaters>
            <Round $bg="#98e4ca" $ring aria-label="Account">
              <svg width="50" height="50" viewBox="0 0 50 50">
                <path d="M8 44q2-6 12-7h10q10 1 12 7l-6 6H14z" fill="#00b876" />
                <path d="M17 20q0 14 4 16v3q4 3 8 0v-3q4-2 4-16l-8-5z" fill="#fff" />
                <path d="M15 24Q13 12 25 12t10 12l-2-3-9-1-1-2-4 2z" fill="#064a32" />
              </svg>
            </Round>
            <Round $bg="radial-gradient(circle closest-side, #8fd3b2 72%, #fff 76%)" $ring aria-label="Chat"><Chat s={20} /></Round>
            <Round $bg="#c0c0c0" aria-label="Favorite"><Line s={36} w={1.500} d="M12 2.500L14.800 9L22 9.600L16.500 14.300L18.200 21.300L12 17.500L5.800 21.300L7.500 14.300L2 9.600L9.200 9z" /></Round>
            <Round $bg="#a3a3a3" aria-label="Screen">
              <svg width="38" height="28" viewBox="0 0 38 28" fill="none" stroke="#fff" strokeWidth="2"><path d="M2 2h34v18H2zM2 26h34" /><path d="M3 15h32" strokeDasharray="5 2" strokeWidth="1.400" /></svg>
            </Round>
            <Round $bg="#78b991" aria-label="Settings"><Gear s={38} w={1.400} /></Round>
            <BigRound $bg="linear-gradient(#76b567, #28634b)" aria-label="Tools">
              <svg width="36" height="36" viewBox="0 0 36 36" fill="none" stroke="#dfeee2" strokeWidth="1.800">
                <rect x="2" y="2" width="14" height="14" rx="3" /><rect x="2" y="20" width="14" height="14" rx="3" /><rect x="20" y="20" width="14" height="14" rx="3" />
                <rect x="21.500" y="3.500" width="11" height="11" rx="2" transform="rotate(45 27 9)" />
              </svg>
            </BigRound>
          </Floaters>
        </Viewport>
      </Browser>
    </WorkArea>
    <Taskbar>
      <StartGroup />
      <TaskApp $compact $active aria-label="Chrome"><Chrome /></TaskApp>
      <TaskApp $compact aria-label="Terminal"><Spiral /></TaskApp>
      <TaskApp $compact aria-label="File transfer"><Lock screen /></TaskApp>
      <TaskApp $compact aria-label="WeChat"><WeChat /></TaskApp>
      <TaskApp $compact aria-label="Code editor"><CodeLogo /></TaskApp>
      <TaskApp $compact aria-label="PicGo"><PicLogo s={26} /></TaskApp>
      <Tray><Time /></Tray>
    </Taskbar>
  </Monitor>
);

export default function App() {
  return (
    <Desktop>
      <Global />
      <LeftMonitor />
      <RightMonitor />
    </Desktop>
  );
}
